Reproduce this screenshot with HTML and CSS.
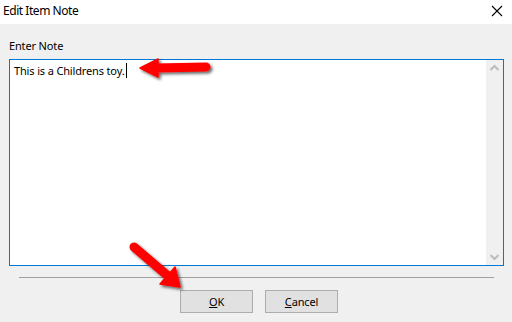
FILE: index.html
```html
<!DOCTYPE html>
<html>
<head>
<meta charset="utf-8">
<link rel="stylesheet" href="styles.css">
</head>
<body>
<div class="dialog">
  <div class="titlebar">
    <span class="title">Edit Item Note</span>
    <svg class="close" width="12" height="12" viewBox="0 0 12 12"><path d="M1 1L11 11M11 1L1 11" stroke="#000" stroke-width="1.1" fill="none"/></svg>
  </div>
  <div class="content">
    <div class="label">Enter Note</div>
    <div class="note">
      <div class="note-text">This is a Childrens toy.<span class="caret"></span></div>
      <div class="scrollbar">
        <svg width="17" height="17" viewBox="0 0 17 17"><path d="M4.5 10L8.5 6L12.5 10" stroke="#bcbcbc" stroke-width="2" fill="none"/></svg>
        <svg width="17" height="17" viewBox="0 0 17 17"><path d="M4.5 7L8.5 11L12.5 7" stroke="#bcbcbc" stroke-width="2" fill="none"/></svg>
      </div>
    </div>
    <div class="separator"></div>
    <div class="buttons">
      <button class="btn"><u>O</u>K</button>
      <button class="btn"><u>C</u>ancel</button>
    </div>
  </div>
  <svg class="arrows" width="512" height="322" viewBox="0 0 512 322">
    <defs>
      <filter id="sh" x="-20%" y="-20%" width="150%" height="150%">
        <feDropShadow dx="2" dy="2" stdDeviation="1.5" flood-color="#000" flood-opacity="0.6"/>
      </filter>
    </defs>
    <g filter="url(#sh)" fill="#f00" stroke="#f00">
      <line x1="155" y1="68" x2="206" y2="67" stroke-width="9" stroke-linecap="round"/>
      <polygon points="140,68 158,59 158,77" stroke-width="1.5" stroke-linejoin="round"/>
    </g>
    <g filter="url(#sh)" fill="#f00" stroke="#f00">
      <line x1="134" y1="247" x2="168" y2="276" stroke-width="9" stroke-linecap="round"/>
      <polygon points="180,287 160,284 175,267" stroke-width="1.5" stroke-linejoin="round"/>
    </g>
  </svg>
</div>
</body>
</html>
```
FILE: styles.css
```css
html, body {
  margin: 0;
  padding: 0;
}
body {
  width: 512px;
  height: 322px;
  overflow: hidden;
  font-family: "Noto Sans", "Liberation Sans", sans-serif;
  font-size: 11px;
  letter-spacing: -0.15px;
  color: #000;
}
.dialog {
  position: relative;
  width: 512px;
  height: 322px;
  background: #f0f0f0;
  display: flex;
  flex-direction: column;
}
.titlebar {
  height: 24px;
  background: #fff;
  display: flex;
  align-items: center;
  justify-content: space-between;
  padding: 0 8px 2px 3px;
  box-sizing: border-box;
}
.title {
  font-size: 12px;
  letter-spacing: -0.45px;
  line-height: 16px;
}
.close {
  margin-right: 1px;
}
.content {
  padding: 14px 0 0 9px;
  display: flex;
  flex-direction: column;
}
.label {
  line-height: 16px;
  height: 21px;
}
.note {
  width: 495px;
  height: 207px;
  box-sizing: border-box;
  border: 1px solid #0078d7;
  background: #fff;
  display: flex;
  justify-content: space-between;
}
.note-text {
  padding: 3px 0 0 4px;
  line-height: 16px;
  white-space: nowrap;
}
.caret {
  display: inline-block;
  width: 1px;
  height: 15px;
  background: #000;
  vertical-align: -3px;
  margin-left: 2px;
}
.scrollbar {
  width: 17px;
  background: #f0f0f0;
  display: flex;
  flex-direction: column;
  justify-content: space-between;
}
.scrollbar svg {
  display: block;
}
.separator {
  margin: 11px 0 0 10px;
  width: 475px;
  height: 1px;
  background: #a0a0a0;
}
.buttons {
  display: flex;
  gap: 12px;
  margin: 12px 0 0 171px;
}
.btn {
  width: 73px;
  height: 23px;
  box-sizing: border-box;
  border: 1px solid #adadad;
  background: #e1e1e1;
  font-family: "Noto Sans", "Liberation Sans", sans-serif;
  font-size: 11px;
  letter-spacing: -0.15px;
  color: #000;
  padding: 0;
  line-height: 16px;
}
.arrows {
  position: absolute;
  left: 0;
  top: 0;
  pointer-events: none;
}
```
